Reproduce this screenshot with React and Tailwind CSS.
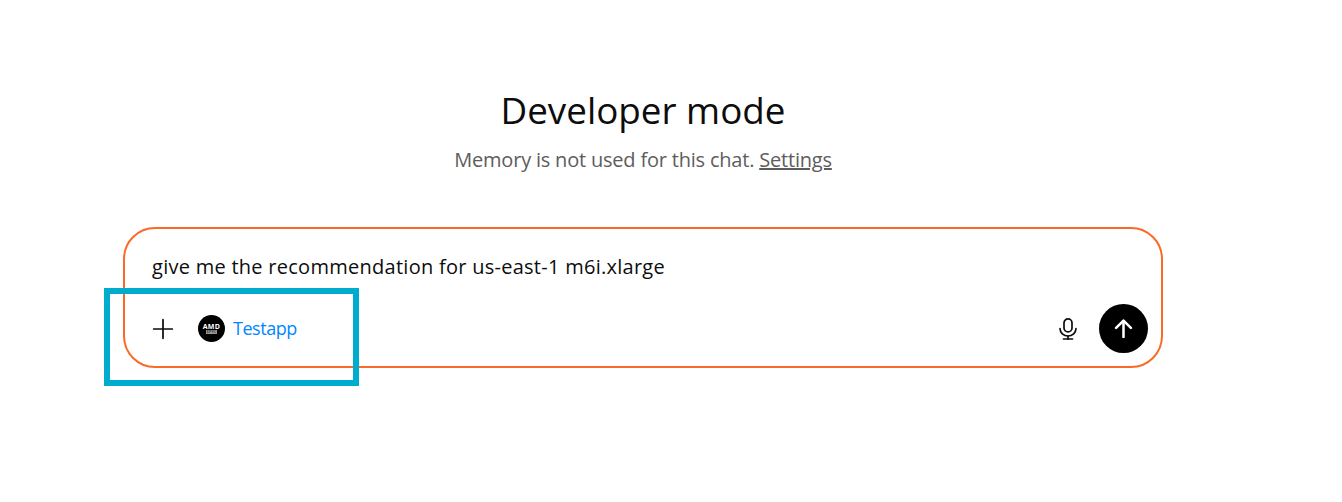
import { Plus } from "lucide-react";

const MicIcon = () => (
  <svg width="18" height="22" viewBox="0 0 18 22" fill="none" stroke="#0d0d0d" strokeWidth="1.7" strokeLinecap="round">
    <rect x="5" y="0.9" width="8" height="13" rx="4" />
    <path d="M1 10.5a8 7.5 0 0 0 16 0" />
    <path d="M9 18v3" />
    <path d="M4.5 21h9" />
  </svg>
);

const SendArrow = () => (
  <svg width="19" height="19" viewBox="0 0 18 18" fill="none" stroke="white" strokeWidth="2.4" strokeLinecap="round" strokeLinejoin="round">
    <path d="M9 17V2" />
    <path d="M2 8.5 9 1.5l7 7" />
  </svg>
);

const App = () => {
  return (
    <div className="h-[502px] w-full bg-white overflow-hidden font-['Open_Sans',sans-serif] pl-[123px] pt-[87px]">
      <div className="w-[1040px] flex flex-col items-center relative">
        <h1 className="text-[36.8px] leading-[46px] font-normal text-[#0d0d0d]">Developer mode</h1>
        <p className="mt-[13px] text-[20px] tracking-[-0.2px] leading-[28px] text-[#5d5d5d]">
          Memory is not used for this chat. <span className="underline">Settings</span>
        </p>

        <div className="mt-[53px] w-full h-[141px] rounded-[32px] border-2 border-[#fb6a25] pl-[27px] pr-[13px] pt-[25px] pb-[13px] flex flex-col justify-between">
          <div className="text-[20px] leading-[26px] tracking-[0.27px] text-[#0d0d0d]">give me the recommendation for us-east-1 m6i.xlarge</div>
          <div className="flex items-center justify-between">
            <div className="flex items-center">
              <Plus size={32} strokeWidth={1.3} className="text-[#0d0d0d] ml-[-5px]" />
              <div className="ml-[19px] w-[27px] h-[27px] rounded-full bg-black flex flex-col items-center justify-center">
                <span className="text-[7px] leading-[7px] font-bold tracking-[0.3px] text-white">AMD</span>
                <span className="text-[4px] leading-[4px] bg-[#999] px-[1px] text-black">EPYC</span>
              </div>
              <span className="ml-[8px] text-[18px] tracking-[-0.45px] text-[#0285ff]">Testapp</span>
            </div>
            <div className="flex items-center gap-[22px]">
              <MicIcon />
              <button className="w-[49px] h-[49px] rounded-full bg-black flex items-center justify-center">
                <SendArrow />
              </button>
            </div>
          </div>
        </div>

        {/* highlight drawn over the card */}
        <div className="absolute left-[-19px] top-[201px] w-[255px] h-[98px] border-[6px] border-[#00acce]" />
      </div>
    </div>
  );
};

export default App;
